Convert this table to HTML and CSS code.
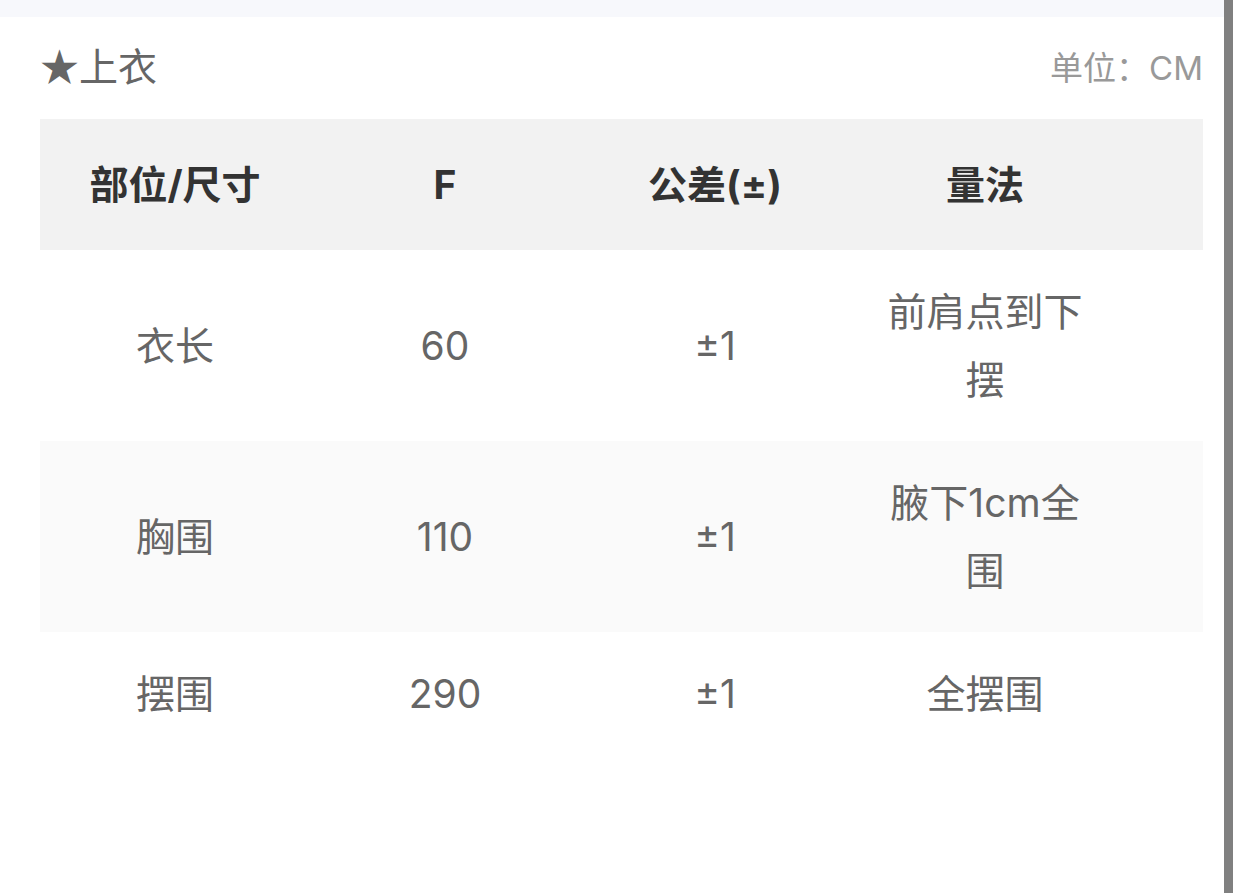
FILE: index.html
```html
<!DOCTYPE html>
<html lang="zh-CN">
<head>
<meta charset="utf-8">
<link rel="stylesheet" href="styles.css">
</head>
<body>
<div class="page">
  <main class="main">
    <div class="topband"></div>
    <section class="content">
      <div class="titlebar">
        <div class="title">★上衣</div>
        <div class="unit">单位：CM</div>
      </div>
      <div class="table">
        <div class="row head">
          <div class="cell">部位/尺寸</div>
          <div class="cell">F</div>
          <div class="cell">公差(±)</div>
          <div class="cell">量法</div>
          <div class="cell filler"></div>
        </div>
        <div class="row">
          <div class="cell">衣长</div>
          <div class="cell">60</div>
          <div class="cell">±1</div>
          <div class="cell">前肩点到下摆</div>
          <div class="cell filler"></div>
        </div>
        <div class="row alt">
          <div class="cell">胸围</div>
          <div class="cell">110</div>
          <div class="cell">±1</div>
          <div class="cell">腋下1cm全围</div>
          <div class="cell filler"></div>
        </div>
        <div class="row">
          <div class="cell">摆围</div>
          <div class="cell">290</div>
          <div class="cell">±1</div>
          <div class="cell">全摆围</div>
          <div class="cell filler"></div>
        </div>
      </div>
    </section>
  </main>
  <div class="scrollbar"></div>
  <div class="edge"></div>
</div>
</body>
</html>
```
FILE: styles.css
```css
html, body {
  margin: 0;
  padding: 0;
  background: #ffffff;
}
body {
  font-family: Inter, "Noto Sans CJK SC", sans-serif;
  color: #666666;
}
.page {
  display: flex;
  width: 1242px;
  height: 893px;
  overflow: hidden;
}
.main {
  width: 1224px;
  flex: none;
  background: #ffffff;
}
.topband {
  height: 17px;
  background: #f7f8fc;
}
.content {
  padding: 0 21px 0 40px;
}
.titlebar {
  height: 102px;
  display: flex;
  align-items: center;
  justify-content: space-between;
}
.title {
  font-size: 39px;
  line-height: 50px;
  color: #666666;
  font-family: "Noto Sans CJK SC", sans-serif;
  margin-bottom: 8px;
}
.unit {
  font-size: 33px;
  line-height: 50px;
  color: #999999;
  font-family: Inter, "Noto Sans CJK SC", sans-serif;
}
.table {
  width: 1163px;
}
.row {
  display: grid;
  grid-template-columns: 270px 270px 270px 270px 1fr;
  align-items: center;
  background: #ffffff;
}
.row.alt {
  background: #fafafa;
}
.row.head {
  background: #f2f2f2;
  height: 131px;
  font-weight: 700;
  color: #333333;
}
.cell {
  text-align: center;
  font-size: 39px;
  line-height: 68px;
  padding: 27.5px 32px;
}
.row.head .cell {
  padding-top: 0;
  padding-bottom: 0;
}
.cell.filler {
  padding: 0;
}
.scrollbar {
  width: 9px;
  flex: none;
  background: #808080;
}
.edge {
  flex: 1;
  background: #ffffff;
}
```
